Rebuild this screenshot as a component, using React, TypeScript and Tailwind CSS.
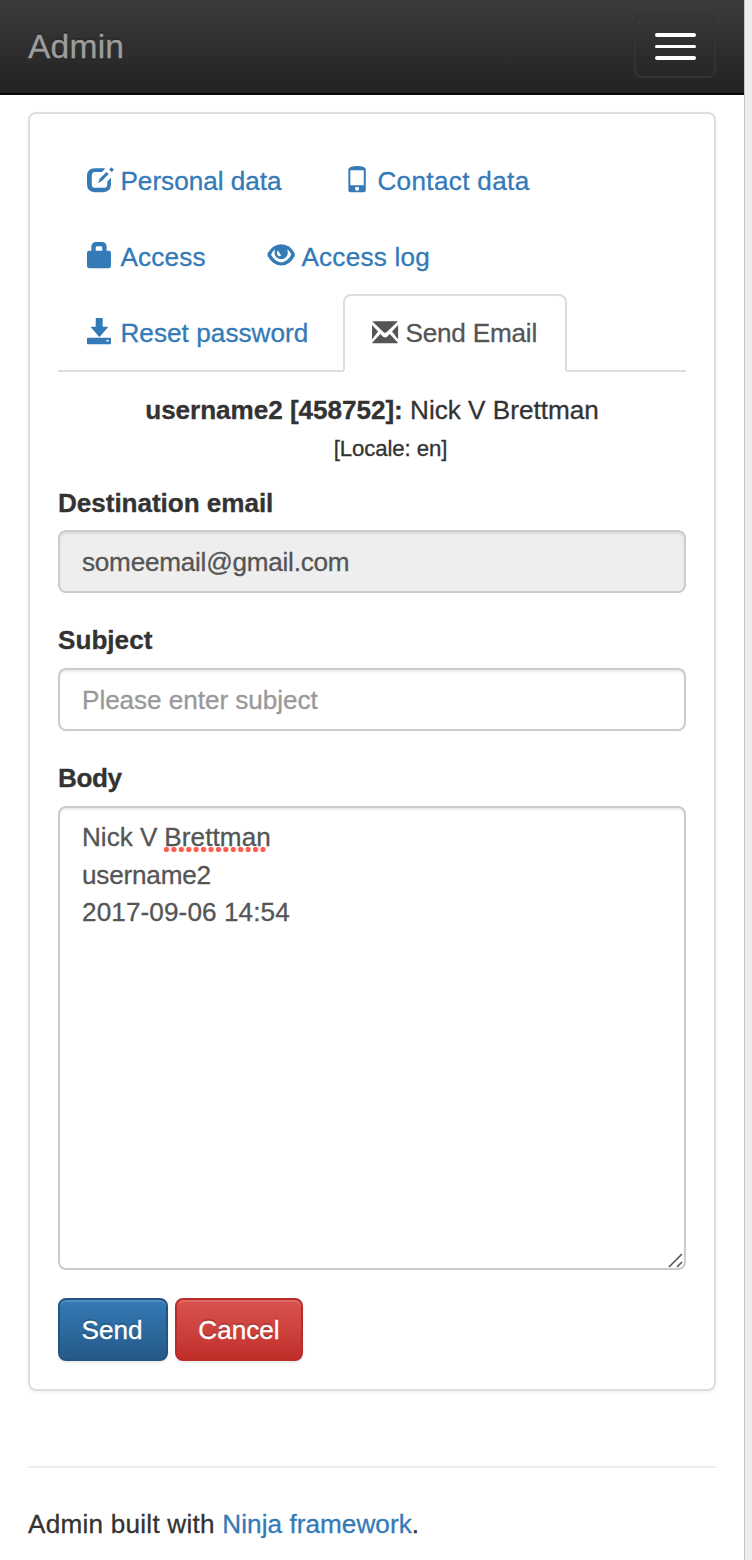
import type { ReactNode } from "react";

function Glyph({ children }: { children: ReactNode }) {
  return (
    <svg viewBox="0 0 1200 1200" className="-mt-[1px] h-[26.13px] w-[26.13px] shrink-0 overflow-visible" fill="currentColor" aria-hidden="true">
      <g transform="translate(0 1200) scale(1 -1)" fillRule="evenodd">{children}</g>
    </svg>
  );
}

const EditIcon = () => (
  <Glyph>
    <path d="M350 1100h400q50 0 90 -13l-150 -167h-340q-50 0 -90 -40t-40 -90v-460q0 -60 40 -95t90 -35h460q50 0 85 35t35 95v150l170 190v-320q0 -165 -93.500 -257.500t-256.500 -92.500h-400q-165 0 -257.500 92.500t-92.500 257.500v400q0 165 92.500 257.500t257.500 92.500z" />
    <path d="M1020 1040l90 90q10 8 20 0l95 -95q8 -10 0 -20l-90 -90zM510 410l80 215l305 305l100 -100l-305 -305z" />
  </Glyph>
);

const PhoneIcon = () => (
  <Glyph>
    <path d="M300 1150q140 50 300 50t300 -50q100 -30 100 -110v-940q0 -100 -100 -100h-600q-100 0 -100 100v940q0 80 100 110zM290 1010v-690h620v690zM600 250a95 95 0 1 0 0 -190a95 95 0 1 0 0 190z" />
  </Glyph>
);

const LockIcon = () => (
  <Glyph>
    <path d="M900 800h100q41 0 70.500 -29.500t29.500 -70.500v-600q0 -41 -29.500 -70.500t-70.500 -29.500h-900q-41 0 -70.500 29.500t-29.500 70.500v600q0 41 29.500 70.500t70.500 29.500h100v200q0 82 59 141t141 59h300q82 0 141 -59t59 -141v-200zM400 800h300v150q0 21 -14.500 35.500t-35.500 14.500h-200q-21 0 -35.500 -14.500t-14.500 -35.500v-150z" />
  </Glyph>
);

const EyeIcon = () => (
  <Glyph>
    <path d="M-10 690q110 190 250 290q170 120 370 120t370 -120q140 -100 240 -290q30 -70 0 -140q-100 -190 -240 -300q-170 -130 -370 -130t-370 130q-140 110 -250 300q-30 70 0 140zM140 620q90 -160 210 -260q120 -98 255 -98t255 98q120 100 210 260q-75 150 -165 230q-15 10 -20 0q25 -75 25 -140a305 305 0 0 0 -610 0q0 65 25 140q-5 10 -20 0q-90 -80 -165 -230zM450 800q35 0 45 -45q8 -40 40 -75q35 -40 50 -75q15 -35 -20 -55q-50 -20 -95 20q-60 60 -60 135q0 80 40 95z" />
  </Glyph>
);

const SaveIcon = () => (
  <Glyph>
    <path d="M420 1200h280q20 0 20 -20v-380h220q40 0 15 -35l-360 -420q-25 -30 -50 0l-360 420q-25 35 15 35h200v380q0 20 20 20zM25 290h1050q25 0 25 -25v-240q0 -25 -25 -25h-1050q-25 0 -25 25v240q0 25 25 25zM890 190v-70h110v70z" />
  </Glyph>
);

const EnvelopeIcon = () => (
  <Glyph>
    <path d="M40 1100h1120q35 0 10 -25l-490 -475q-80 -75 -160 0l-490 475q-25 25 10 25zM0 930l280 -300l-280 -370zM1200 930l-280 -300l280 -370zM30 90h1140q35 0 15 30l-370 395l-110 -115q-105 -95 -210 0l-110 115l-370 -395q-20 -30 15 -30z" />
  </Glyph>
);

function Tab({ icon, label, width, spacing }: { icon: ReactNode; label: string; width: string; spacing: string }) {
  return (
    <a href="#" className={`flex h-[76px] items-center gap-[7.300px] pl-[29px] text-[#337ab7] ${width}`}>
      {icon}
      <span className={`mt-[3px] whitespace-nowrap ${spacing}`}>{label}</span>
    </a>
  );
}

export default function App() {
  return (
    <div className="flex h-[1560px] w-[752px] overflow-hidden bg-white text-[26.13px] leading-[37.33px] text-[#333] [-webkit-text-stroke:0.3px_currentColor] [font-family:'Liberation_Sans',Arial,sans-serif]">
      <div className="flex w-[744px] shrink-0 flex-col">
        <header className="flex h-[95px] shrink-0 items-center justify-between border-b-2 border-[#080808] bg-linear-to-b from-[#3c3c3c] to-[#222] pr-7 pl-7">
          <a href="#" className="text-[33.6px] tracking-[0.200px] text-[#9d9d9d] [text-shadow:0_-2px_0_rgba(0,0,0,0.25)]">Admin</a>
          <button aria-label="Menu" className="flex h-[63px] w-[82px] flex-col items-center justify-center gap-[7.500px] rounded-[8px] border-2 border-[#333]">
            <span className="h-[3.700px] w-[41px] rounded-[2px] bg-white" />
            <span className="h-[3.700px] w-[41px] rounded-[2px] bg-white" />
            <span className="h-[3.700px] w-[41px] rounded-[2px] bg-white" />
          </button>
        </header>

        <main className="mx-7 mt-[17px] flex h-[1279px] shrink-0 flex-col rounded-[8px] border-2 border-[#ddd] px-7 pt-7 shadow-[0_2px_4px_rgba(0,0,0,0.05)]">
          <nav className="h-[230px] shrink-0 border-b-2 border-[#ddd]">
            <div className="flex">
              <Tab icon={<EditIcon />} label="Personal data" width="w-[257px]" spacing="" />
              <Tab icon={<PhoneIcon />} label="Contact data" width="w-[250px]" spacing="tracking-[0.330px]" />
            </div>
            <div className="flex">
              <Tab icon={<LockIcon />} label="Access" width="w-[181px]" spacing="tracking-[0.200px]" />
              <Tab icon={<EyeIcon />} label="Access log" width="w-[250px]" spacing="tracking-[0.220px]" />
            </div>
            <div className="flex">
              <Tab icon={<SaveIcon />} label="Reset password" width="w-[284.500px]" spacing="tracking-[0.050px]" />
              <a href="#" className="flex h-[78px] w-[224.500px] items-center gap-[7.300px] rounded-t-[8px] border-2 border-[#ddd] border-b-white bg-white pl-[27.500px] text-[#555]">
                <EnvelopeIcon />
                <span className="mt-[1px] tracking-[-0.200px] whitespace-nowrap">Send Email</span>
              </a>
            </div>
          </nav>

          <p className="mt-[20px] h-[38px] text-center"><strong className="tracking-[-0.050px]">username2 [458752]:</strong> Nick V Brettman</p>
          <p className="h-[38px] pl-[37px] text-center text-[22.200px] tracking-[-0.100px]">[Locale: en]</p>

          <form className="flex flex-col" onSubmit={(e) => e.preventDefault()}>
            <label htmlFor="email" className="mt-[17px] h-[45px] font-bold tracking-[-0.060px]">Destination email</label>
            <input id="email" readOnly value="someemail@gmail.com" className="h-[63px] rounded-[8px] border-2 border-[#ccc] bg-[#eee] px-[22px] pt-[2px] tracking-[-0.240px] text-[#555] shadow-[inset_0_2px_2px_rgba(0,0,0,0.075)] outline-none" />
            <label htmlFor="subject" className="mt-[29px] h-[46px] font-bold">Subject</label>
            <input id="subject" placeholder="Please enter subject" className="h-[63px] rounded-[8px] border-2 border-[#ccc] bg-white px-[22px] pt-[2px] tracking-[-0.050px] text-[#555] shadow-[inset_0_2px_2px_rgba(0,0,0,0.075)] outline-none placeholder:text-[#999]" />
            <span className="mt-[29px] h-[46px] font-bold tracking-[-0.400px]">Body</span>
            <div role="textbox" aria-label="Body" className="relative h-[464px] rounded-[8px] border-2 border-[#ccc] px-[22px] pt-[11px] text-[#555] shadow-[inset_0_2px_2px_rgba(0,0,0,0.075)]">
              <div>Nick V <span className="relative -left-[0.500px] tracking-[0.080px]">Brettman<i className="absolute top-[25px] left-0 h-[5px] w-[104px] bg-[radial-gradient(circle_at_2.500px_2.500px,#ff5b4f_2.300px,transparent_3px)] bg-size-[7.430px_5px]" /></span></div>
              <div className="relative top-px tracking-[-0.200px]">username2</div>
              <div className="tracking-[0.100px]">2017-09-06 14:54</div>
              <svg viewBox="0 0 16 16" className="absolute right-0 bottom-0 h-4 w-4" stroke="#555" strokeWidth="1.6" fill="none"><path d="M1 15L14 2M9 15L14 10" /></svg>
            </div>
            <div className="mt-[28px] flex gap-[7px]">
              <button className="h-[63px] w-[110px] rounded-[8px] border-2 border-[#245580] bg-linear-to-b from-[#337ab7] to-[#265a88] pt-[2px] pr-[2px] text-white shadow-[inset_0_2px_0_rgba(255,255,255,0.15),0_2px_2px_rgba(0,0,0,0.075)] [text-shadow:0_-2px_0_rgba(0,0,0,0.2)]">Send</button>
              <button className="h-[63px] w-[128px] rounded-[8px] border-2 border-[#b92c28] bg-linear-to-b from-[#d9534f] to-[#c12e2a] pt-[2px] text-white shadow-[inset_0_2px_0_rgba(255,255,255,0.15),0_2px_2px_rgba(0,0,0,0.075)] [text-shadow:0_-2px_0_rgba(0,0,0,0.2)]">Cancel</button>
            </div>
          </form>
        </main>

        <footer className="mx-7 mt-[75px] border-t-2 border-[#eee] pt-[38px]">
          <span className="tracking-[0.240px]">Admin built with </span><a href="#" className="tracking-[0.050px] text-[#337ab7]">Ninja framework</a>.
        </footer>
      </div>
      <div className="flex-1 border-l border-[#c8c8c8] bg-[#ededed]" />
    </div>
  );
}
